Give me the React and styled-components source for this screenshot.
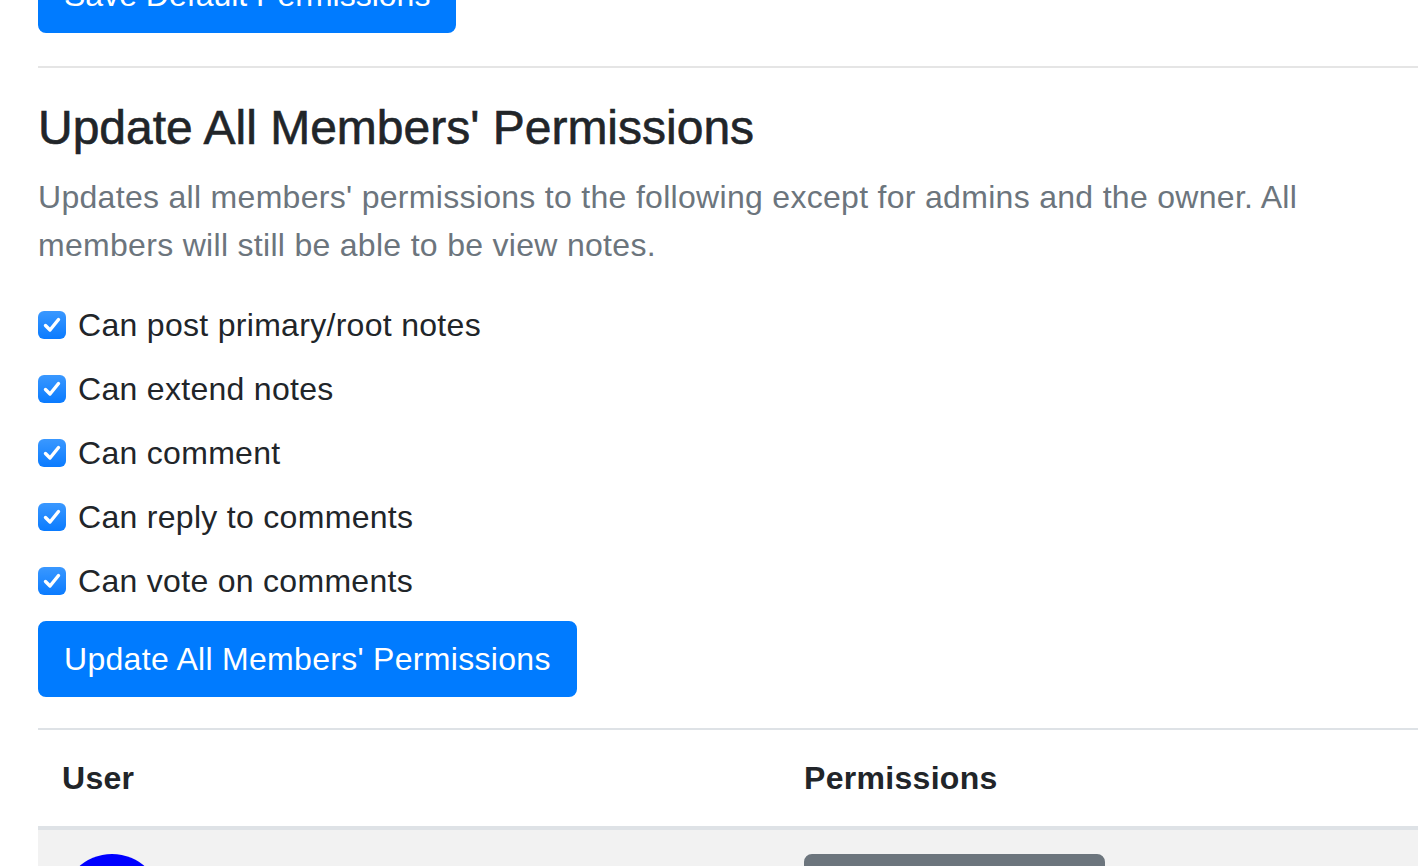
import React from 'react';
import styled, { createGlobalStyle } from 'styled-components';

const GlobalStyle = createGlobalStyle`
  body {
    margin: 0;
    background: #fff;
    font-family: 'Liberation Sans', Arial, sans-serif;
    font-size: 32px;
    line-height: 1.5;
    letter-spacing: 0.3px;
    color: #212529;
    overflow: hidden;
  }
`;

const Page = styled.main`
  width: 1380px;
  padding-left: 38px;
  margin-top: -43px;
`;

const Button = styled.button`
  display: inline-block;
  font-family: inherit;
  font-size: 32px;
  line-height: 48px;
  letter-spacing: ${(p) => (p.$tight ? '0' : '0.3px')};
  padding: 12px 24px;
  border: 2px solid ${(p) => (p.$variant === 'secondary' ? '#6c757d' : '#007bff')};
  background: ${(p) => (p.$variant === 'secondary' ? '#6c757d' : '#007bff')};
  color: #fff;
  border-radius: 8px;
  cursor: pointer;
`;

const Rule = styled.hr`
  border: 0;
  border-top: 2px solid rgba(0, 0, 0, 0.1);
  margin: 33px 0 31px;
`;

const Heading = styled.h4`
  font-size: 48px;
  font-weight: 500;
  line-height: 1.2;
  letter-spacing: 0;
  margin: 0 0 16px;
  color: #212529;
  -webkit-text-stroke: 0.6px #212529;
`;

const Muted = styled.p`
  max-width: 1300px;
  color: #6c757d;
  margin: 0 0 32px;
`;

const CheckRow = styled.label`
  display: flex;
  align-items: center;
  gap: 12px;
  margin-bottom: 16px;
  line-height: 48px;
`;

const CheckBox = styled.span`
  width: 28px;
  height: 28px;
  flex: none;
  border-radius: 6px;
  background: linear-gradient(#3a98ff, #0a7bff);
  display: flex;
  align-items: center;
  justify-content: center;
`;

const Table = styled.table`
  width: 100%;
  margin-top: 31px;
  border-collapse: collapse;
  th,
  td {
    padding: 24px;
    text-align: left;
    vertical-align: top;
  }
  th {
    font-weight: 700;
    border-top: 2px solid #dee2e6;
    border-bottom: 4px solid #dee2e6;
  }
`;

const StripedRow = styled.tr`
  background: #f2f2f2;
`;

const Avatar = styled.div`
  width: 100px;
  height: 100px;
  border-radius: 50%;
  background: #0000ff;
`;

const PermButton = styled(Button)`
  width: 301px;
  height: 76px;
`;

const permissions = [
  'Can post primary/root notes',
  'Can extend notes',
  'Can comment',
  'Can reply to comments',
  'Can vote on comments',
];

const Check = ({ label }) => (
  <CheckRow>
    <CheckBox>
      <svg width="22" height="22" viewBox="0 0 22 22">
        <path
          d="M4.5 11.5 L9 16 L17.5 5.5"
          fill="none"
          stroke="#fff"
          strokeWidth="3.4"
          strokeLinecap="round"
          strokeLinejoin="round"
        />
      </svg>
    </CheckBox>
    {label}
  </CheckRow>
);

export default function App() {
  return (
    <>
      <GlobalStyle />
      <Page>
        <Button $tight>Save Default Permissions</Button>
        <Rule />
        <Heading>Update All Members' Permissions</Heading>
        <Muted>
          Updates all members' permissions to the following except for admins and the
          owner. All members will still be able to be view notes.
        </Muted>
        {permissions.map((p) => (
          <Check key={p} label={p} />
        ))}
        <Button>Update All Members' Permissions</Button>
        <Table>
          <thead>
            <tr>
              <th style={{ width: 694 }}>User</th>
              <th>Permissions</th>
            </tr>
          </thead>
          <tbody>
            <StripedRow>
              <td>
                <Avatar />
              </td>
              <td>
                <PermButton $variant="secondary">Edit</PermButton>
              </td>
            </StripedRow>
          </tbody>
        </Table>
      </Page>
    </>
  );
}
